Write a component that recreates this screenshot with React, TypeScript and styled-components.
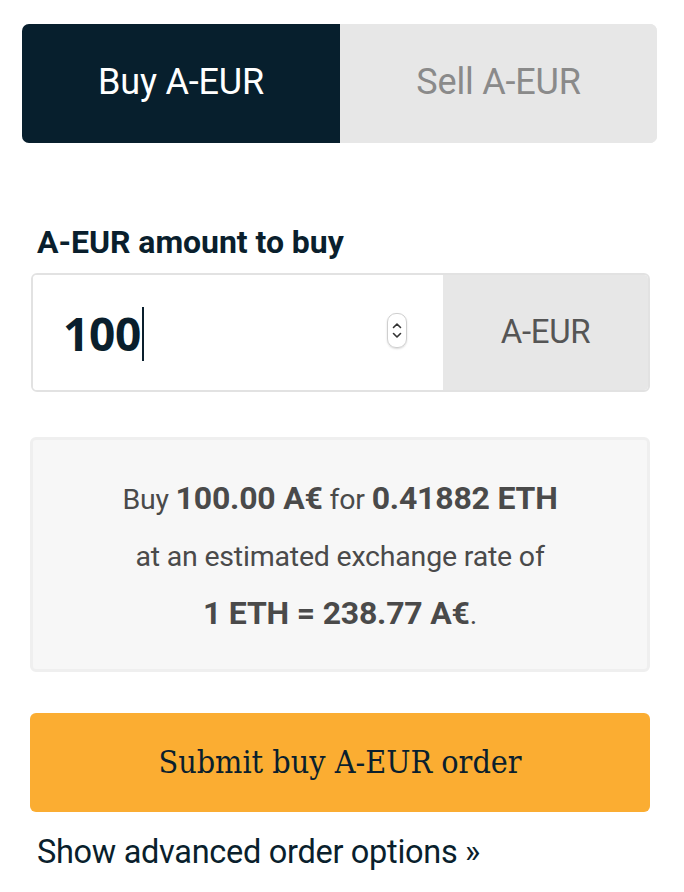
import React from "react";
import styled, { createGlobalStyle } from "styled-components";

const Global = createGlobalStyle`
  html, body { margin: 0; padding: 0; background: #fff; }
  body { font-family: Roboto, "Liberation Sans", sans-serif; }
`;

const Page = styled.div`
  width: 684px;
  height: 892px;
  box-sizing: border-box;
  padding: 24px 27px 0 22px;
  display: flex;
  flex-direction: column;
`;

const Tabs = styled.div`
  display: flex;
  height: 119px;
  border-radius: 7px;
  overflow: hidden;
  background: #e7e7e7;
`;

const Tab = styled.div<{ $active?: boolean }>`
  flex: ${(p) => (p.$active ? "0 0 318px" : "1")};
  display: flex;
  align-items: center;
  justify-content: center;
  padding-bottom: 3px;
  font-family: Roboto, sans-serif;
  font-size: 36px;
  letter-spacing: -0.2px;
  background: ${(p) => (p.$active ? "#071f2d" : "#e7e7e7")};
  color: ${(p) => (p.$active ? "#ffffff" : "#8a8a8a")};
`;

const Form = styled.div`
  padding: 0 7px 0 8px;
  display: flex;
  flex-direction: column;
`;

const Label = styled.div`
  margin: 82px 0 0 7px;
  font-family: Roboto, sans-serif;
  font-weight: 700;
  font-size: 32px;
  letter-spacing: -0.05px;
  color: #0a1f2d;
  line-height: 34px;
`;

const InputGroup = styled.div`
  margin-top: 14px;
  margin-left: 1px;
  display: flex;
  height: 119px;
  border-radius: 6px;
  overflow: hidden;
  border: 2px solid #e2e2e2;
  box-sizing: border-box;
`;

const InputField = styled.div`
  flex: 0 0 410px;
  background: #fff;
  display: flex;
  align-items: center;
  padding-left: 30px;
  padding-right: 36px;
  box-sizing: border-box;
`;

const Value = styled.span`
  font-family: "Open Sans", sans-serif;
  font-weight: 700;
  font-size: 46px;
  color: #0a1f2d;
  letter-spacing: -0.3px;
`;

const Caret = styled.span`
  display: inline-block;
  width: 2px;
  height: 54px;
  background: #0a1f2d;
  margin-left: 1px;
  margin-top: 3px;
`;

const Spacer = styled.div`
  flex: 1;
`;

const Spinner = styled.div`
  width: 18px;
  height: 33px;
  border: 1px solid #cfcfcf;
  border-radius: 9px;
  box-shadow: 0 1px 2px rgba(0, 0, 0, 0.15);
  display: flex;
  flex-direction: column;
  align-items: center;
  justify-content: center;
  gap: 3px;
  margin-top: -4px;
`;

const Addon = styled.div`
  flex: 1;
  background: #e7e7e7;
  display: flex;
  align-items: center;
  justify-content: center;
  padding-bottom: 2px;
  font-family: Roboto, sans-serif;
  font-size: 33px;
  color: #555;
  letter-spacing: -0.3px;
`;

const InfoBox = styled.div`
  margin-top: 45px;
  height: 235px;
  box-sizing: border-box;
  background: #f7f7f7;
  border: 3px solid #efefef;
  border-radius: 6px;
  display: flex;
  flex-direction: column;
  align-items: center;
  justify-content: center;
  padding-top: 4px;
  font-family: Roboto, sans-serif;
  font-size: 28.5px;
  color: #4a4a4a;
  letter-spacing: -0.2px;
`;

const InfoLine = styled.div`
  line-height: 57px;
  text-align: center;
  white-space: nowrap;
`;

const Strong = styled.b`
  font-weight: 700;
  font-size: 32px;
`;

const Submit = styled.button`
  margin-top: 41px;
  height: 99px;
  border: none;
  border-radius: 6px;
  background: #fbad32;
  color: #0a1f2d;
  font-family: "DejaVu Serif Condensed", "DejaVu Serif", "Liberation Serif", serif;
  font-stretch: condensed;
  font-size: 32px;
  letter-spacing: 0;
  font-weight: 400;
  cursor: pointer;
  padding: 0 0 2px 0;
`;

const Advanced = styled.a`
  margin: 21px 0 0 7px;
  font-family: Roboto, sans-serif;
  font-size: 32.5px;
  color: #0a1f2d;
  text-decoration: none;
  letter-spacing: -0.3px;
  line-height: 38px;
`;

const Chevron = ({ up }: { up?: boolean }) => (
  <svg width="10" height="7" viewBox="0 0 10 7">
    <path
      d={up ? "M1.5 5.5 L5 2 L8.5 5.5" : "M1.5 1.5 L5 5 L8.5 1.5"}
      fill="none"
      stroke="#333"
      strokeWidth="1.6"
      strokeLinecap="round"
      strokeLinejoin="round"
    />
  </svg>
);

export default function App() {
  return (
    <>
      <Global />
      <Page>
        <Tabs>
          <Tab $active>Buy A-EUR</Tab>
          <Tab>Sell A-EUR</Tab>
        </Tabs>
        <Form>
          <Label>A-EUR amount to buy</Label>
          <InputGroup>
            <InputField>
              <Value>100</Value>
              <Caret />
              <Spacer />
              <Spinner>
                <Chevron up />
                <Chevron />
              </Spinner>
            </InputField>
            <Addon>A-EUR</Addon>
          </InputGroup>
          <InfoBox>
            <InfoLine>
              Buy <Strong>100.00 A€</Strong> for <Strong>0.41882 ETH</Strong>
            </InfoLine>
            <InfoLine>at an estimated exchange rate of</InfoLine>
            <InfoLine>
              <Strong>1 ETH = 238.77 A€</Strong>.
            </InfoLine>
          </InfoBox>
          <Submit>Submit buy A-EUR order</Submit>
          <Advanced href="#">Show advanced order options »</Advanced>
        </Form>
      </Page>
    </>
  );
}
